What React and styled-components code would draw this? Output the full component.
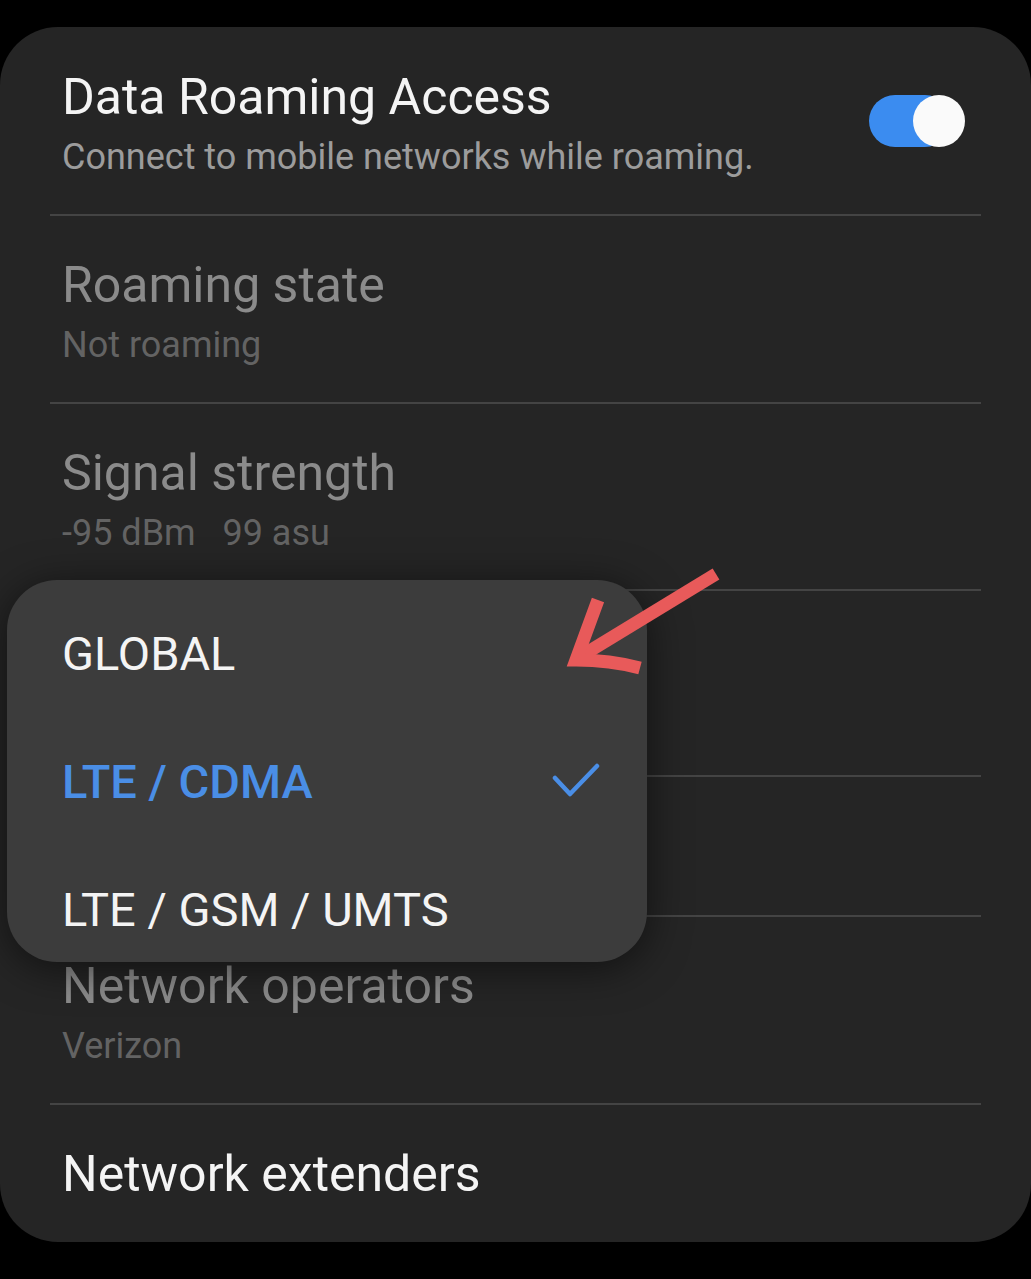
import React from "react";
import styled, { createGlobalStyle } from "styled-components";

const Global = createGlobalStyle`
  html, body { margin: 0; padding: 0; background: #000; }
  body { font-family: Roboto, "Noto Sans", "Liberation Sans", sans-serif; }
  * { box-sizing: border-box; }
`;

const Page = styled.div`
  width: 1031px;
  height: 1279px;
  background: #000;
  padding-top: 27px;
  position: relative;
  overflow: hidden;
`;

const Panel = styled.div`
  position: relative;
  width: 1031px;
  height: 1215px;
  background: #252525;
  border-radius: 58px;
  display: flex;
  flex-direction: column;
`;

const Row = styled.div`
  height: ${(p) => p.$h}px;
  margin: 0 50px;
  padding: ${(p) => (p.$single ? "0 12px" : "7px 12px 0")};
  display: flex;
  align-items: center;
  justify-content: space-between;
  border-top: ${(p) => (p.$first ? "none" : "2px solid #444")};
`;

const TextCol = styled.div`
  display: flex;
  flex-direction: column;
  gap: 13px;
`;

const Title = styled.div`
  font-size: 50px;
  line-height: 52px;
  color: ${(p) => (p.$dim ? "#8b8b8b" : "#f4f4f4")};
  white-space: nowrap;
`;

const Sub = styled.div`
  font-size: 36px;
  line-height: 42px;
  color: ${(p) => (p.$dim ? "#636363" : "#9c9c9c")};
  white-space: pre;
`;

const Switch = styled.div`
  position: relative;
  width: 96px;
  height: 52px;
  margin-right: 4px;
  margin-top: -7px;
  display: flex;
  align-items: center;
`;

const Track = styled.div`
  width: 82px;
  height: 52px;
  border-radius: 26px;
  background: #3b8cf0;
`;

const Thumb = styled.div`
  position: absolute;
  right: 0;
  top: 0;
  width: 52px;
  height: 52px;
  border-radius: 50%;
  background: #fafafa;
`;

const Popup = styled.div`
  position: absolute;
  left: 7px;
  top: 553px;
  width: 640px;
  height: 382px;
  padding-top: 9px;
  background: #3c3c3c;
  border-radius: 50px;
  box-shadow: 0 6px 40px rgba(0, 0, 0, 0.55);
  display: flex;
  flex-direction: column;
`;

const Option = styled.div`
  flex: 0 0 128px;
  padding: 0 47px 0 55px;
  display: flex;
  align-items: center;
  justify-content: space-between;
  font-size: 47px;
  color: ${(p) => (p.$active ? "#4a8ee6" : "#f4f4f4")};
  font-weight: ${(p) => (p.$active ? 500 : 400)};
`;

const Arrow = styled.svg`
  position: absolute;
  left: 560px;
  top: 560px;
  width: 170px;
  height: 130px;
  overflow: visible;
`;

export default function App() {
  return (
    <Page>
      <Global />
      <Panel>
        <Row $h={187} $first>
          <TextCol>
            <Title>Data Roaming Access</Title>
            <Sub>Connect to mobile networks while roaming.</Sub>
          </TextCol>
          <Switch>
            <Track />
            <Thumb />
          </Switch>
        </Row>
        <Row $h={188}>
          <TextCol>
            <Title $dim>Roaming state</Title>
            <Sub $dim>Not roaming</Sub>
          </TextCol>
        </Row>
        <Row $h={187}>
          <TextCol>
            <Title $dim>Signal strength</Title>
            <Sub $dim>{"-95 dBm   99 asu"}</Sub>
          </TextCol>
        </Row>
        <Row $h={186} />
        <Row $h={140} $single />
        <Row $h={188}>
          <TextCol>
            <Title $dim>Network operators</Title>
            <Sub $dim>Verizon</Sub>
          </TextCol>
        </Row>
        <Row $h={139} $single>
          <Title>Network extenders</Title>
        </Row>

        <Popup>
          <Option>GLOBAL</Option>
          <Option $active>
            LTE / CDMA
            <svg width="48" height="36" viewBox="0 0 48 36">
              <polyline
                points="3,15 18,31 45,3"
                fill="none"
                stroke="#4a8ee6"
                strokeWidth="4.5"
                strokeLinecap="round"
                strokeLinejoin="round"
              />
            </svg>
          </Option>
          <Option>LTE / GSM / UMTS</Option>
        </Popup>
      </Panel>
      <Arrow viewBox="560 560 170 130">
        <g fill="none" stroke="#e85a5a" strokeWidth="13" strokeLinejoin="miter">
          <line x1="716" y1="574" x2="583" y2="655" />
          <path d="M598 600 L576 660 Q610 660 640 668" />
        </g>
      </Arrow>
    </Page>
  );
}
